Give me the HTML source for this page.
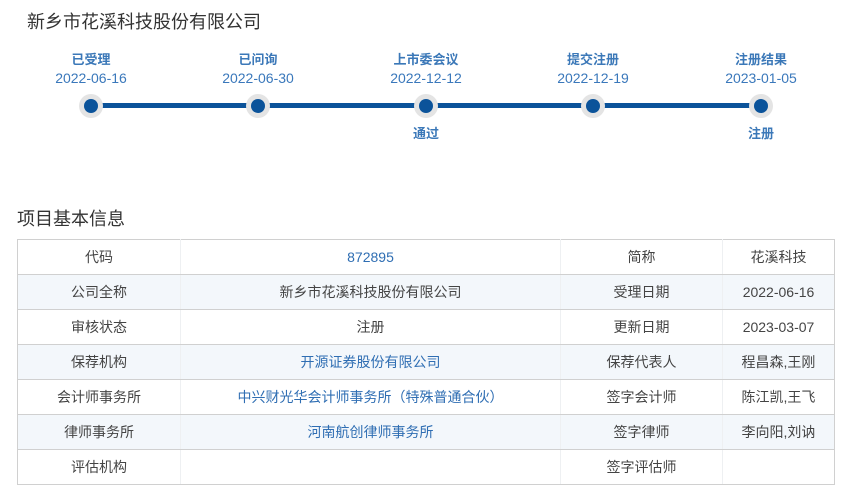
<!DOCTYPE html>
<html><head><meta charset="utf-8"><style>
body{margin:0;width:848px;height:490px;background:#fff;font-family:"Liberation Sans","Noto Sans CJK SC",sans-serif;position:relative;overflow:hidden}
.t{position:absolute;white-space:nowrap}
.lab{position:absolute;width:140px;text-align:center;font-size:14px;color:#3a78bb;line-height:18px}
.lab b{display:block;font-weight:bold;color:#3b78b8;font-size:13px}
.dot{position:absolute;width:24px;height:24px;border-radius:50%;background:#e4e4e4;top:94px}
.dot i{position:absolute;left:5px;top:5px;width:14px;height:14px;border-radius:50%;background:#0b539a}
table{position:absolute;left:17px;top:239px;border-collapse:collapse;font-size:14px;color:#444}
td{height:34px;text-align:center;border-top:1px solid #d0d0d0;border-bottom:1px solid #d0d0d0;border-left:1px solid #eef0f2;border-right:1px solid #eef0f2;padding:0}
td:first-child{border-left:1px solid #d0d0d0}td:last-child{border-right:1px solid #d0d0d0}
tr:nth-child(even) td{background:#f3f7fb}
.b{color:#2f6eb3}
</style></head><body>
<div class="t" style="left:27px;top:8px;font-size:18px;color:#333">新乡市花溪科技股份有限公司</div>
<div style="position:absolute;left:91px;top:103px;width:670px;height:5px;background:#0b539a"></div>
<div class="dot" style="left:79px"><i></i></div>
<div class="dot" style="left:246px"><i></i></div>
<div class="dot" style="left:414px"><i></i></div>
<div class="dot" style="left:581px"><i></i></div>
<div class="dot" style="left:749px"><i></i></div>
<div class="lab" style="left:21px;top:51px"><b>已受理</b>2022-06-16</div>
<div class="lab" style="left:188px;top:51px"><b>已问询</b>2022-06-30</div>
<div class="lab" style="left:356px;top:51px"><b>上市委会议</b>2022-12-12</div>
<div class="lab" style="left:523px;top:51px"><b>提交注册</b>2022-12-19</div>
<div class="lab" style="left:691px;top:51px"><b>注册结果</b>2023-01-05</div>
<div class="lab" style="left:356px;top:125px"><b>通过</b></div>
<div class="lab" style="left:691px;top:125px"><b>注册</b></div>
<div class="t" style="left:17px;top:205px;font-size:18px;color:#333">项目基本信息</div>
<table>
<tr><td style="width:162px">代码</td><td style="width:379px" class="b">872895</td><td style="width:161px">简称</td><td style="width:111px">花溪科技</td></tr>
<tr><td>公司全称</td><td>新乡市花溪科技股份有限公司</td><td>受理日期</td><td>2022-06-16</td></tr>
<tr><td>审核状态</td><td>注册</td><td>更新日期</td><td>2023-03-07</td></tr>
<tr><td>保荐机构</td><td class="b">开源证券股份有限公司</td><td>保荐代表人</td><td>程昌森,王刚</td></tr>
<tr><td>会计师事务所</td><td class="b">中兴财光华会计师事务所（特殊普通合伙）</td><td>签字会计师</td><td>陈江凯,王飞</td></tr>
<tr><td>律师事务所</td><td class="b">河南航创律师事务所</td><td>签字律师</td><td>李向阳,刘讷</td></tr>
<tr><td>评估机构</td><td></td><td>签字评估师</td><td></td></tr>
</table>
</body></html>
